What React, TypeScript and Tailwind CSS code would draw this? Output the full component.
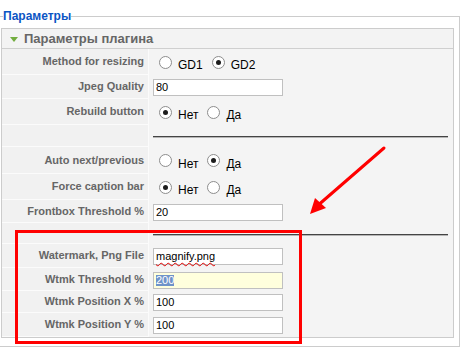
import React from 'react';

type RowKind =
  | { kind: 'radio'; label: string; options: string[]; checked: number }
  | { kind: 'input'; label: string; value: string; variant?: 'file' | 'selected' }
  | { kind: 'hr' };

const rows: { h: string; row: RowKind }[] = [
  { h: 'h-[26px]', row: { kind: 'radio', label: 'Method for resizing', options: ['GD1', 'GD2'], checked: 1 } },
  { h: 'h-[24px]', row: { kind: 'input', label: 'Jpeg Quality', value: '80' } },
  { h: 'h-[26px]', row: { kind: 'radio', label: 'Rebuild button', options: ['Нет', 'Да'], checked: 0 } },
  { h: 'h-[22px]', row: { kind: 'hr' } },
  { h: 'h-[27px]', row: { kind: 'radio', label: 'Auto next/previous', options: ['Нет', 'Да'], checked: 1 } },
  { h: 'h-[26px]', row: { kind: 'radio', label: 'Force caption bar', options: ['Нет', 'Да'], checked: 0 } },
  { h: 'h-[23px]', row: { kind: 'input', label: 'Frontbox Threshold %', value: '20' } },
  { h: 'h-[21px]', row: { kind: 'hr' } },
  { h: 'h-[24px]', row: { kind: 'input', label: 'Watermark, Png File', value: 'magnify.png', variant: 'file' } },
  { h: 'h-[23px]', row: { kind: 'input', label: 'Wtmk Threshold %', value: '200', variant: 'selected' } },
  { h: 'h-[22px]', row: { kind: 'input', label: 'Wtmk Position X %', value: '100' } },
  { h: 'h-[24px]', row: { kind: 'input', label: 'Wtmk Position Y %', value: '100' } },
];

function Radio({ on }: { on: boolean }) {
  return (
    <span className="w-[13px] h-[13px] rounded-full border border-[#8d8d8d] bg-white flex items-center justify-center shrink-0">
      {on && <span className="w-[5px] h-[5px] rounded-full bg-[#1c1c1c]" />}
    </span>
  );
}

function Value({ row }: { row: RowKind }) {
  if (row.kind === 'hr') {
    return (
      <div className="flex-1 self-center pl-[4px] pr-[5px] pt-[2px]">
        <div className="h-px bg-[#444]" />
        <div className="h-px bg-[#b5b5b5]" />
      </div>
    );
  }
  if (row.kind === 'radio') {
    return (
      <div className="flex-1 flex items-center pl-[10px]">
        {row.options.map((o, i) => (
          <div key={o} className="flex items-center mr-[9px]">
            <Radio on={i === row.checked} />
            <span className="ml-[6px] mt-[6px] text-[12px] leading-none text-black">{o}</span>
          </div>
        ))}
      </div>
    );
  }
  // поле ввода
  let inner: React.ReactNode = row.value;
  if (row.variant === 'file') {
    inner = (
      <span className="underline decoration-wavy decoration-[#e00000] decoration-1 underline-offset-[2px]">
        {row.value}
      </span>
    );
  }
  if (row.variant === 'selected') {
    inner = <span className="bg-[#6f93c9] text-white">{row.value}</span>;
  }
  return (
    <div className="flex-1 flex items-center pl-[4px] pt-[1px]">
      <div
        className={
          'w-[130px] h-[17px] border border-[#c0c0c0] flex items-center pl-[2px] text-[11px] leading-none text-black ' +
          (row.variant === 'selected' ? 'bg-[#ffffdd]' : 'bg-white')
        }
      >
        {inner}
      </div>
    </div>
  );
}

export default function App() {
  return (
    <div className="relative w-[464px] h-[354px] bg-white overflow-hidden font-['Liberation_Sans',Arial,sans-serif]">
      <fieldset className="mt-[9px] ml-[-6px] w-[466px] border border-[#cccccc] pl-[6px] pr-[5px] pt-[5px] pb-[8px]">
        <legend className="ml-[2px] text-[12px] leading-[14px] font-bold text-[#0b55c4]">Параметры</legend>

        <div className="border border-[#cccccc] bg-[#f4f4f4]">
          {/* заголовок панели */}
          <div className="h-[20px] flex items-center border-b border-[#cfcfcf] bg-[#f3f3f3]">
            <svg width="22" height="19" viewBox="0 0 22 19" className="shrink-0">
              <polygon points="8,8 16,8 12,13" fill="#72ad3f" />
            </svg>
            <span className="text-[13px] leading-none font-bold text-[#666]">Параметры плагина</span>
          </div>

          {rows.map(({ h, row }, i) => (
            <div key={i} className={'flex ' + h}>
              <div className="w-[147px] shrink-0 flex items-center justify-end pr-[4px] bg-[#f1f1f1] border-b border-r border-[#fbfbfb]">
                {row.kind !== 'hr' && (
                  <span className="text-[11px] leading-none font-bold text-[#666] whitespace-nowrap">{row.label}</span>
                )}
              </div>
              <Value row={row} />
            </div>
          ))}
        </div>
      </fieldset>

      {/* красная рамка */}
      <div className="absolute left-[15px] top-[230px] w-[287px] h-[114px] border-[3px] border-[#ff0000]" />

      {/* стрелка */}
      <svg className="absolute left-0 top-0" width="464" height="354" viewBox="0 0 464 354">
        <line x1="384" y1="148" x2="316" y2="207" stroke="#ff0000" strokeWidth="3" strokeLinecap="round" />
        <polygon points="310,214 315,198 326,208" fill="#ff0000" />
      </svg>
    </div>
  );
}
